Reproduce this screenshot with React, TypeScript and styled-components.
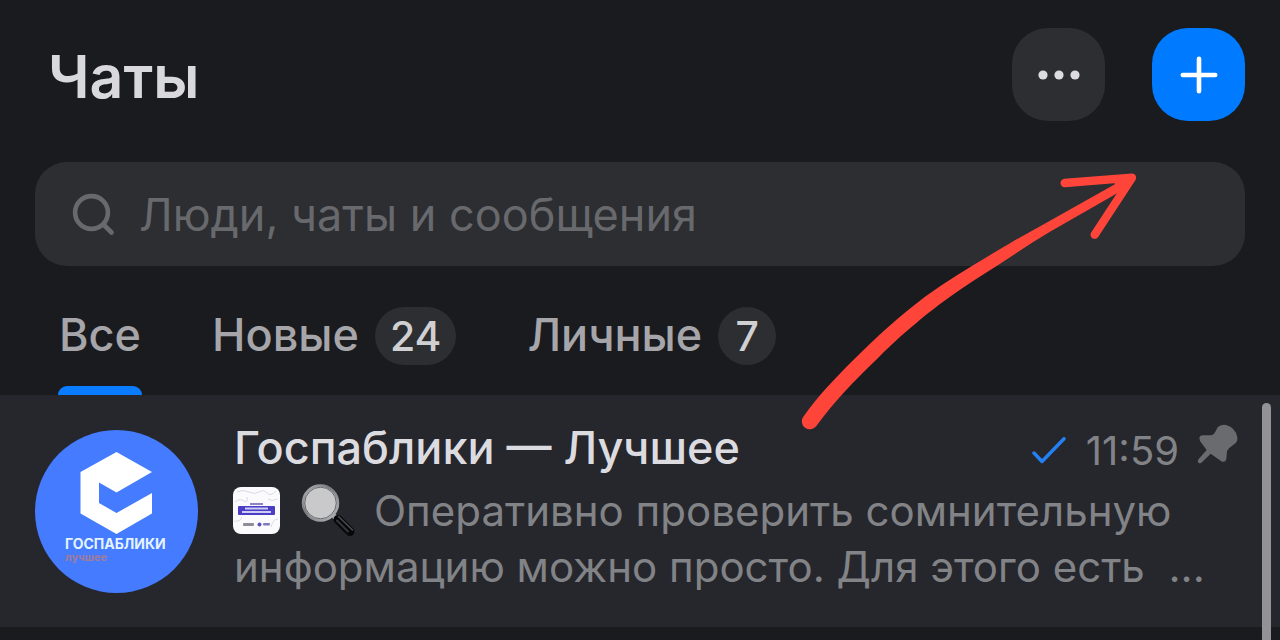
import React from "react";
import styled, { createGlobalStyle } from "styled-components";

const GlobalStyle = createGlobalStyle`
  * { box-sizing: border-box; }
  html, body, #root { height: 100%; }
  body {
    margin: 0;
    background: #1a1b1f;
    font-family: Inter, "Liberation Sans", sans-serif;
    overflow: hidden;
  }
  button, input { font-family: inherit; }
  button { border: 0; padding: 0; background: none; cursor: pointer; }
`;

const Page = styled.main`
  position: relative;
  min-height: 100%;
  background: #1a1b1f;
`;

const Header = styled.header`
  display: flex;
  align-items: center;
  gap: 47px;
  padding: 28px 35px 0 48px;
`;

const Title = styled.h1`
  flex: 1;
  margin: 0;
  padding-top: 4px;
  font-size: 59px;
  line-height: 88px;
  font-weight: 600;
  color: #d9d9dd;
`;

const IconButton = styled.button<{ $primary?: boolean }>`
  display: grid;
  place-items: center;
  width: 93px;
  height: 93px;
  border-radius: 36px;
  background: ${(p) => (p.$primary ? "#007aff" : "#2d2e32")};
`;

const SearchBox = styled.label`
  display: flex;
  align-items: center;
  gap: 24px;
  height: 104px;
  margin: 41px 35px 0;
  padding: 0 36px;
  border-radius: 32px;
  background: #2d2e32;
`;

const SearchInput = styled.input`
  flex: 1;
  min-width: 0;
  padding: 2px 0 0;
  border: 0;
  outline: 0;
  background: none;
  font-size: 45px;
  line-height: 56px;
  color: #d9d9dd;
  &::placeholder { color: #68696d; opacity: 1; }
`;

const Tabs = styled.div`
  display: flex;
  gap: 69px;
  padding: 41px 58px 0;
`;

const Tab = styled.button<{ $active?: boolean }>`
  display: flex;
  flex-direction: column;
  gap: 21px;
  &::after {
    content: "";
    width: 100%;
    height: 9px;
    border-radius: 9px 9px 0 0;
    background: ${(p) => (p.$active ? "#0a7cff" : "transparent")};
  }
`;

const TabLabel = styled.span`
  display: flex;
  align-items: flex-start;
  gap: 16px;
  height: 58px;
  padding: 0 1px;
  font-size: 45px;
  line-height: 55px;
  font-weight: 500;
  color: #a6a6aa;
`;

const Badge = styled.span`
  min-width: 58px;
  padding: 0 15px;
  border-radius: 29px;
  background: #2d2e32;
  font-size: 41px;
  line-height: 58px;
  text-align: center;
  color: #d0d0d3;
`;

const ChatRow = styled.article`
  display: flex;
  align-items: flex-start;
  gap: 36px;
  padding: 29px 35px 32px;
  background: #26272c;
`;

const Avatar = styled.svg`
  flex: none;
  width: 163px;
  height: 163px;
  margin-top: 6px;
`;

const ChatBody = styled.div`
  flex: 1;
  min-width: 0;
`;

const ChatTop = styled.div`
  display: flex;
  align-items: flex-start;
  height: 48px;
  margin-bottom: 11px;
`;

const ChatName = styled.h2`
  flex: 1;
  margin: 0;
  font-size: 45px;
  line-height: 48px;
  font-weight: 500;
  color: #dcdce0;
`;

const Meta = styled.div`
  display: flex;
  align-items: center;
  gap: 18px;
  padding-right: 6px;
  font-size: 40px;
  line-height: 54px;
  color: #828387;
`;

const PinIcon = styled.svg`
  align-self: flex-start;
`;

const Message = styled.p`
  margin: 0;
  font-size: 42px;
  line-height: 56px;
  color: #828387;
`;

const InlineArt = styled.svg`
  vertical-align: middle;
  margin: -8px 22px 0 -1px;
  & + & { margin-right: 18px; }
`;

const ScrollThumb = styled.div`
  position: absolute;
  top: 403px;
  right: 9px;
  bottom: 0;
  width: 9px;
  border-radius: 5px 5px 0 0;
  background: #929297;
`;

const Arrow = styled.svg`
  position: absolute;
  top: 172px;
  right: 142px;
  pointer-events: none;
`;

const tabs = [
  { label: "Все", active: true },
  { label: "Новые", count: 24 },
  { label: "Личные", count: 7 },
];

export default function App() {
  return (
    <Page>
      <GlobalStyle />
      <Header>
        <Title>Чаты</Title>
        <IconButton aria-label="Ещё">
          <svg width="42" height="10" viewBox="0 0 42 10" fill="#dcdce0">
            <circle cx="5" cy="5" r="4.6" />
            <circle cx="21" cy="5" r="4.6" />
            <circle cx="37" cy="5" r="4.6" />
          </svg>
        </IconButton>
        <IconButton $primary aria-label="Создать">
          <svg width="38" height="38" viewBox="0 0 38 38" stroke="#fff" strokeWidth="4.6" strokeLinecap="round">
            <path d="M19 2.8v32.4M2.8 19h32.4" />
          </svg>
        </IconButton>
      </Header>

      <SearchBox>
        <svg width="44" height="44" viewBox="0 0 44 44" fill="none" stroke="#68696d" strokeWidth="4.6" strokeLinecap="round">
          <circle cx="20.5" cy="20.5" r="16.4" />
          <path d="M32.5 32.5l8 8" />
        </svg>
        <SearchInput type="search" aria-label="Поиск" placeholder="Люди, чаты и сообщения" />
      </SearchBox>

      <Tabs role="tablist">
        {tabs.map((t) => (
          <Tab key={t.label} role="tab" aria-selected={!!t.active} $active={t.active}>
            <TabLabel>
              {t.label}
              {t.count && <Badge>{t.count}</Badge>}
            </TabLabel>
          </Tab>
        ))}
      </Tabs>

      <ChatRow>
        <Avatar viewBox="0 0 163 163">
          <circle cx="81.5" cy="81.5" r="81.5" fill="#447bff" />
          <path
            d="M81.5 22L117 42L81.5 62.500L64 52.500V73L81.500 83L117 63V83.500L81.500 104L45.500 83.500V42Z"
            fill="#fff"
          />
          <text x="30" y="119" fontSize="14" fontWeight="700" fill="#e4f4ff" fontFamily="Inter, sans-serif">
            ГОСПАБЛИКИ
          </text>
          <text x="30" y="131" fontSize="11" fontWeight="700" fill="#a07c9c" fontFamily="Inter, sans-serif">
            лучшее
          </text>
        </Avatar>
        <ChatBody>
          <ChatTop>
            <ChatName>Госпаблики — Лучшее</ChatName>
            <Meta>
              <svg width="36" height="28" viewBox="0 0 36 28" fill="none" stroke="#2380f5" strokeWidth="3.4" strokeLinecap="round" strokeLinejoin="round">
                <path d="M2 16l8 8.500L32 1.700" />
              </svg>
              <time dateTime="11:59">11:59</time>
              <PinIcon width="42" height="42" viewBox="590 84 126 126" fill="#6a6b6f">
                <path d="M652 94Q661 84 677 87Q706 95 711 124Q712 137 705 142L686 157Q679 163 679 176L678 190Q674 201 663 196L631 173L605 199Q600 204 594 200Q590 195 595 189L619 162L599 135Q594 127 599 121Q603 117 614 118L633 118Q641 116 645 107Z" />
              </PinIcon>
            </Meta>
          </ChatTop>
          <Message>
            <InlineArt width="47" height="47" viewBox="0 0 47 47">
              <rect width="47" height="47" rx="8" fill="#fbfbfd" />
              <g fill="none" stroke="#cfd0dc" strokeWidth="0.8">
                <path d="M4 5q6 -3 12 0t10 0q5 -3 8 1t9 -2" />
                <path d="M2 15q5 -4 9 -1t3 -4M35 12q4 3 9 0M1 34q7 1 8 -4M38 40q2 -8 7 -8" />
              </g>
              <rect x="17" y="16" width="13" height="2" fill="#8b86c8" />
              <rect x="5" y="19" width="37" height="9" rx="1" fill="#4a3fc4" />
              <g fill="#cfcbf5">
                <rect x="12" y="20.500" width="23" height="2" />
                <rect x="9" y="24" width="29" height="2" />
              </g>
              <rect x="10" y="36" width="11" height="3" rx="1" fill="#8c8d98" />
              <circle cx="26.500" cy="37.500" r="2" fill="#5a53b8" />
              <rect x="30" y="36" width="7" height="2.500" rx="1" fill="#7f7bb8" />
            </InlineArt>
            <InlineArt width="55" height="54" viewBox="0 0 55 54">
              <defs>
                <linearGradient id="rim" x1="0" y1="0" x2="1" y2="1">
                  <stop offset="0" stopColor="#b4b5b7" />
                  <stop offset="0.4" stopColor="#77797c" />
                  <stop offset="1" stopColor="#b8b9bb" />
                </linearGradient>
              </defs>
              <path d="M32 31l5 5" stroke="#a2a4a7" strokeWidth="5" />
              <path d="M37 35.500L49 47.500" stroke="#07080a" strokeWidth="9" strokeLinecap="round" />
              <path d="M37.500 32.500L51.500 46" stroke="#4b4f53" strokeWidth="1.500" strokeLinecap="round" />
              <path d="M36 36.500L47 47.500" stroke="#33373b" strokeWidth="2" strokeLinecap="round" />
              <circle cx="19.500" cy="19" r="17.500" fill="#c9c9cb" stroke="url(#rim)" strokeWidth="2.500" />
              <circle cx="19.500" cy="19" r="15.800" fill="none" stroke="#66686b" strokeWidth="1" />
            </InlineArt>
            Оперативно проверить сомнительную информацию можно просто. Для этого есть &nbsp;...
          </Message>
        </ChatBody>
      </ChatRow>

      <ScrollThumb />
      <Arrow width="338" height="260" viewBox="60 66 1014 780" aria-hidden="true">
        <path
          d="M70 800C115 737 165 685 220 630C285 565 358 498 435 440C515 382 605 330 690 280C730 256 770 234 810 212L1006 102L1022 124L810 245C755 277 702 315 650 348C602 378 556 407 510 440C465 472 430 500 390 535C355 565 320 597 288 630C225 690 165 752 109 828A24 24 0 0 1 70 800Z"
          fill="#ff453a"
        />
        <path d="M854 99L1056 83L944 254" fill="none" stroke="#ff453a" strokeWidth="25" strokeLinecap="round" strokeLinejoin="round" />
        <path d="M1000 90L1058 82L1022 144Z" fill="#ff453a" />
      </Arrow>
    </Page>
  );
}
